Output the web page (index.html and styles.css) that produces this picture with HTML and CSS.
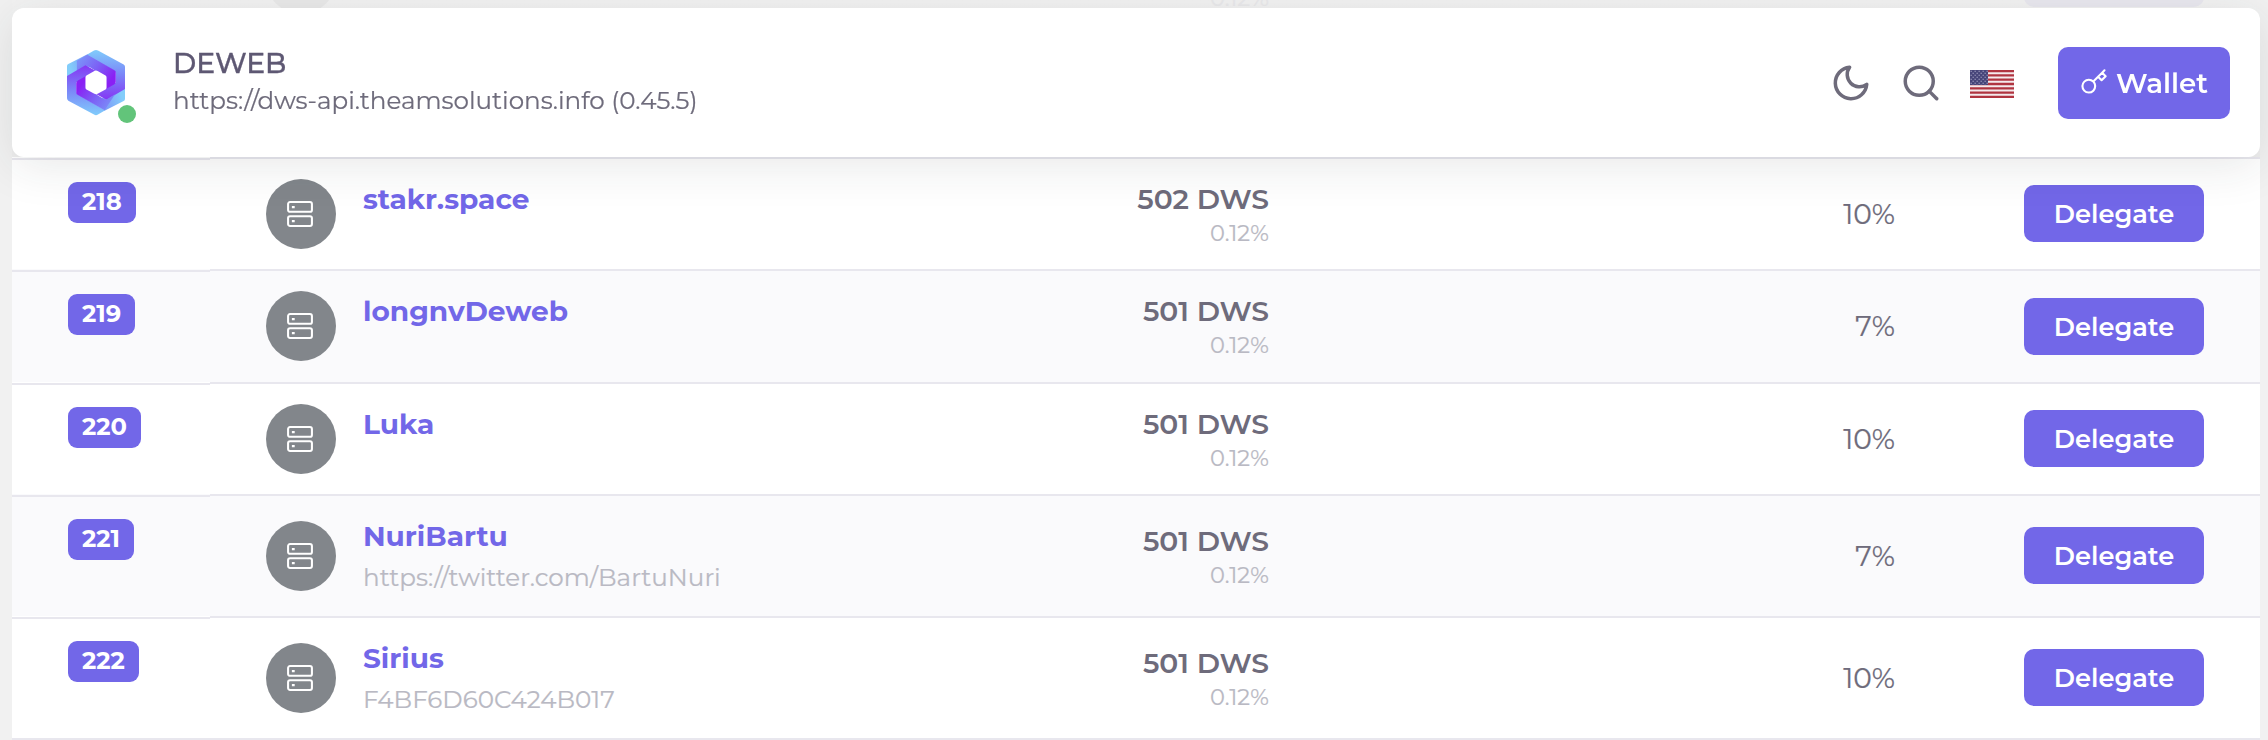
FILE: index.html
```
<!DOCTYPE html>
<html lang="en">
<head>
<meta charset="utf-8">
<title>DEWEB validators</title>
<link rel="stylesheet" href="styles.css">
</head>
<body>
<svg class="defs" width="0" height="0">
  <symbol id="server" viewBox="0 0 24 24"><g fill="none" stroke="currentColor" stroke-width="1.9" stroke-linejoin="round"><rect x="1" y="1" width="22" height="9" rx="1.8"/><rect x="1" y="14" width="22" height="9" rx="1.8"/></g><path fill="currentColor" d="M4.5 4.5h2.6v2.200H4.5zM4.500 17.500h2.600v2.200H4.500z"/></symbol>
</svg>

<header class="navbar">
  <div class="logo">
    <svg width="58" height="67" viewBox="0 0 176 200">
      <defs>
        <linearGradient id="edge" gradientUnits="userSpaceOnUse" x1="10" y1="60" x2="75" y2="40"><stop offset="0" stop-color="#83cdfa"/><stop offset="1" stop-color="#7d94f8"/></linearGradient>
        <linearGradient id="outer" gradientUnits="userSpaceOnUse" x1="125" y1="5" x2="128" y2="150"><stop offset="0" stop-color="#80c8fb"/><stop offset=".5" stop-color="#7b85f8"/><stop offset="1" stop-color="#8538f4"/></linearGradient>
        <linearGradient id="inner" gradientUnits="userSpaceOnUse" x1="45" y1="25" x2="135" y2="90"><stop offset="0" stop-color="#7b8ef8"/><stop offset=".5" stop-color="#7c5ff5"/><stop offset="1" stop-color="#8a20f4"/></linearGradient>
        <path id="shoulder" fill="url(#edge)" d="M0 84V50q0-4 4-6L62 14l30 40-36 0z"/>
        <g id="arm">
          <path fill="url(#outer)" d="M60 16L82 3q6-4 12 0l78 42q4 3 4 7v68l-56 32-32-17 60-35V72q0-5-5-8z"/>
          <path fill="url(#inner)" d="M62 16l82 47q4 2 4 6v29q0 5-5 8l-23 13-32 17V64L65 50q-5-3-11 0L30 64z"/>
        </g>
      </defs>
      <use href="#shoulder"/>
      <use href="#shoulder" transform="rotate(180 88 100)"/>
      <path fill="url(#inner)" d="M30 34L62 16l50 29-24 20-23-15q-5-3-11 0L30 64z"/>
      <use href="#arm"/>
      <use href="#arm" transform="rotate(180 88 100)"/>
      <path fill="#fff" d="M83 65q5-3 10 0l24 14q3 2 3 6v30q0 4-3 6l-24 13q-5 3-10 0l-24-13q-3-2-3-6V85q0-4 3-6z"/>
    </svg>
    <span class="status"></span>
  </div>
  <div class="chain">
    <div class="chain-name">DEWEB</div>
    <div class="chain-api">https://dws-api.theamsolutions.info (0.45.5)</div>
  </div>
  <div class="tools">
    <svg class="tool" viewBox="0 0 24 24"><path d="M21 12.79A9 9 0 1 1 11.21 3 7 7 0 0 0 21 12.79z"/></svg>
    <svg class="tool" viewBox="0 0 24 24"><circle cx="11" cy="11" r="8"/><path d="M21 21l-4.35-4.35"/></svg>
    <svg class="flag" width="44" height="28" viewBox="0 0 44 28">
      <defs><pattern id="stars" width="4" height="4" patternUnits="userSpaceOnUse"><path fill="#b9b8d2" d="M.6.7h1.1v1.1H.6zM2.6 2.7h1.1v1.1H2.6z"/></pattern></defs>
      <path fill="#f4eaec" d="M0 0h44v28H0z"/>
      <path stroke="#b03440" stroke-width="2.3" d="M0 1.08h44M0 5.38h44M0 9.69h44M0 14h44M0 18.31h44M0 22.62h44M0 26.92h44"/>
      <path fill="#474579" d="M0 0h18v15H0z"/><path fill="url(#stars)" d="M0 0h18v15H0z"/>
    </svg>
  </div>
  <button class="wallet">
    <svg width="28" height="28" viewBox="0 0 24 24"><path d="M21 2l-2 2m-7.61 7.61a5.5 5.5 0 1 1-7.778 7.778 5.5 5.5 0 0 1 7.777-7.777zm0 0L15.5 7.5m0 0l3 3L22 7l-3-3m-3.500 3.500L19 4"/></svg>
    <span>Wallet</span>
  </button>
</header>

<main class="table">
  <div class="row previous">
    <div class="cell rank"></div>
    <div class="cell validator"><span class="avatar"></span></div>
    <div class="cell power"><span class="share">0.12%</span></div>
    <div class="cell fee"></div>
    <div class="cell action"><span class="delegate"></span></div>
  </div>
  <div class="row">
    <div class="cell rank"><span class="badge">218</span></div>
    <div class="cell validator"><span class="avatar"><svg><use href="#server"/></svg></span><div class="who"><a class="name">stakr.space</a></div></div>
    <div class="cell power"><span class="tokens">502 DWS</span><span class="share">0.12%</span></div>
    <div class="cell fee">10%</div>
    <div class="cell action"><button class="delegate">Delegate</button></div>
  </div>
  <div class="row odd taller">
    <div class="cell rank"><span class="badge">219</span></div>
    <div class="cell validator"><span class="avatar"><svg><use href="#server"/></svg></span><div class="who"><a class="name">longnvDeweb</a></div></div>
    <div class="cell power"><span class="tokens">501 DWS</span><span class="share">0.12%</span></div>
    <div class="cell fee">7%</div>
    <div class="cell action"><button class="delegate">Delegate</button></div>
  </div>
  <div class="row">
    <div class="cell rank"><span class="badge">220</span></div>
    <div class="cell validator"><span class="avatar"><svg><use href="#server"/></svg></span><div class="who"><a class="name">Luka</a></div></div>
    <div class="cell power"><span class="tokens">501 DWS</span><span class="share">0.12%</span></div>
    <div class="cell fee">10%</div>
    <div class="cell action"><button class="delegate">Delegate</button></div>
  </div>
  <div class="row odd detailed">
    <div class="cell rank"><span class="badge">221</span></div>
    <div class="cell validator"><span class="avatar"><svg><use href="#server"/></svg></span><div class="who"><a class="name">NuriBartu</a><span class="handle">https://twitter.com/BartuNuri</span></div></div>
    <div class="cell power"><span class="tokens">501 DWS</span><span class="share">0.12%</span></div>
    <div class="cell fee">7%</div>
    <div class="cell action"><button class="delegate">Delegate</button></div>
  </div>
  <div class="row detailed last">
    <div class="cell rank"><span class="badge">222</span></div>
    <div class="cell validator"><span class="avatar"><svg><use href="#server"/></svg></span><div class="who"><a class="name">Sirius</a><span class="handle">F4BF6D60C424B017</span></div></div>
    <div class="cell power"><span class="tokens">501 DWS</span><span class="share">0.12%</span></div>
    <div class="cell fee">10%</div>
    <div class="cell action"><button class="delegate">Delegate</button></div>
  </div>
</main>
</body>
</html>
```

FILE: styles.css
```
* { box-sizing: border-box; }
html, body { height: 740px; overflow: hidden; }
body {
  margin: 0;
  padding: 0 8px 0 12px;
  background: #f1f1f1;
  font-family: Montserrat, Inter, "Open Sans", sans-serif;
  font-size: 28px;
  color: #6e6b7b;
}
.defs { position: absolute; }
button { border: 0; font: inherit; }

.navbar {
  position: fixed;
  top: 8px;
  left: 12px;
  right: 8px;
  z-index: 2;
  height: 149px;
  padding: 0 30px 0 55px;
  display: flex;
  align-items: center;
  background: #fff;
  border-radius: 12px;
  box-shadow: 0 8px 48px rgba(34, 41, 47, .11);
}
.logo { position: relative; width: 58px; height: 67px; }
.logo > svg { display: block; }
.status {
  position: absolute;
  left: 51px;
  top: 56px;
  width: 18px;
  height: 18px;
  border-radius: 50%;
  background: #62c47a;
}
.chain { margin-left: 48px; padding-bottom: 3px; white-space: nowrap; }
.chain-name { font-size: 28.2px; font-weight: 500; line-height: 38px; color: #5e5873; -webkit-text-stroke: .3px #5e5873; }
.chain-api { font-size: 24.6px; line-height: 36px; -webkit-text-stroke: .2px #6e6b7b; }
.tools { margin-left: auto; margin-right: 44px; display: flex; align-items: center; gap: 28px; }
.tool { width: 42px; height: 42px; fill: none; stroke: #6e6b7b; stroke-width: 2; stroke-linecap: round; stroke-linejoin: round; }
.flag { display: block; margin-top: 2px; }
.wallet {
  width: 172px;
  height: 72px;
  margin-bottom: -1px;
  padding: 0 0 0 22px;
  display: flex;
  align-items: center;
  gap: 8px;
  border-radius: 10px;
  background: #7267e8;
  color: #fff;
  font-size: 27.7px;
  font-weight: 600;
}
.wallet svg { margin-top: -2px; fill: none; stroke: #fff; stroke-width: 1.8; stroke-linecap: round; stroke-linejoin: round; }

.table { background: #fff; }
.row { display: grid; grid-template-columns: 198px 700px 359px 626px 365px; height: 112px; }
.row.taller { height: 113px; }
.row.detailed { height: 122px; }
.row.odd { background: #fafafc; }
.cell { display: flex; border-top: 2px solid #e8e7ee; }
.rank { margin-top: 1px; padding: 22px 0 0 56px; align-items: flex-start; }
.badge {
  height: 41px;
  padding: 0 14px;
  border-radius: 9px;
  background: #7267e8;
  color: #fff;
  font-size: 24.2px;
  font-weight: 700;
  line-height: 39px;
}
.validator { align-items: center; padding-left: 56px; gap: 27px; }
.avatar {
  width: 70px;
  height: 70px;
  display: grid;
  place-items: center;
  border-radius: 50%;
  background: #82868b;
  color: #fff;
}
.validator > .avatar { margin-top: -1px; }
.avatar svg { width: 26px; height: 26px; margin-right: 2px; }
.who { align-self: flex-start; padding-top: 21px; display: flex; flex-direction: column; }
.name { color: #7267e8; font-weight: 700; line-height: 38px; }
.handle { font-size: 24.6px; line-height: 44px; color: #b9b9c3; -webkit-text-stroke: .2px #b9b9c3; }
.power { flex-direction: column; justify-content: center; align-items: flex-end; padding-top: 1px; }
.tokens { font-size: 28.2px; font-weight: 600; line-height: 36px; }
.share { font-size: 22.5px; line-height: 32px; color: #b9b9c3; -webkit-text-stroke: .2px; }
.fee { align-items: center; justify-content: flex-end; padding-bottom: 1px; -webkit-text-stroke: .2px #6e6b7b; }
.action { align-items: center; justify-content: flex-end; padding: 0 56px 1px 0; }
.delegate {
  width: 180px;
  height: 57px;
  padding: 0;
  border-radius: 10px;
  background: #7267e8;
  color: #fff;
  font-size: 25.7px;
  font-weight: 600;
}
.last { box-sizing: content-box; border-bottom: 2px solid #e8e7ee; }

/* Row scrolled beneath the header, faded by the page tint. */
.row.previous { height: 157px; background: linear-gradient(#f2f2f2, #eee); }
.previous .cell { height: 112px; margin-top: -77px; border: 0; }
.previous .avatar { background: #e9e9e9; }
.previous .share { margin-top: 36px; color: #e9e9eb; }
.previous .delegate { background: #e9e8ef; }
```
